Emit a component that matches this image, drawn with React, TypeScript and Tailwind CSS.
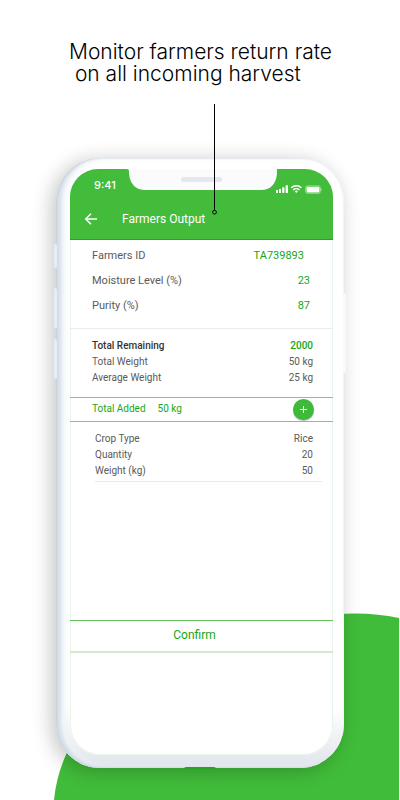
import type { ReactNode } from "react";

type RowProps = { label: string; value: string; bold?: boolean };

function SummaryRow({ label, value, bold }: RowProps) {
  return (
    <div className="flex h-4 items-center justify-between">
      <dt className={bold ? "font-medium text-[#333333]" : ""}>{label}</dt>
      <dd className={bold ? "font-medium text-[#16a616]" : ""}>{value}</dd>
    </div>
  );
}

function DetailRow({ label, children, inset }: { label: string; children: ReactNode; inset?: boolean }) {
  return (
    <div className={`flex h-[25px] items-center justify-between ${inset ? "pr-[29px]" : "pr-[23px]"}`}>
      <dt>{label}</dt>
      <dd className="text-[#16a616]">{children}</dd>
    </div>
  );
}

function StatusIcons() {
  return (
    <svg viewBox="0 0 46 10" className="h-[10px] w-[46px]" fill="white" aria-hidden="true">
      <rect x="0" y="6" width="2" height="3" rx="0.5" />
      <rect x="3" y="5" width="2" height="4" rx="0.5" />
      <rect x="6.2" y="3.3" width="2.2" height="5.7" rx="0.5" />
      <rect x="9.6" y="1.2" width="2.4" height="7.8" rx="0.5" />
      <g fill="none" stroke="white" strokeWidth="1.5">
        <path d="M15.2 3.8a7.3 7.3 0 0 1 10.2 0" />
        <path d="M17.2 5.9a4.5 4.5 0 0 1 6.2 0" />
      </g>
      <path d="M18.7 7.3a2.4 2.4 0 0 1 3.2 0l-1.6 1.8z" />
      <rect x="29.5" y="1.8" width="15" height="7.6" rx="2" fill="none" stroke="white" strokeOpacity="0.4" />
      <rect x="30.5" y="2.8" width="13" height="5.6" rx="1" />
      <path d="M45.2 4.4v2.4q.8-.4.8-1.2t-.8-1.2z" fillOpacity="0.6" />
    </svg>
  );
}

function PhoneScreen() {
  return (
    <div className="relative h-[586px] overflow-hidden rounded-t-[28px] rounded-b-[30px] bg-white font-[Roboto,'Liberation_Sans',sans-serif] shadow-[inset_0_0_0_1px_#e9f5ea]">
      <header className="border-b border-[#1fa81c] bg-[#43bc3b] text-white">
        <div className="flex h-[29px] items-start justify-between pt-2 pr-[11px] pl-6">
          <span className="font-[Inter,'Liberation_Sans',sans-serif] text-[11px] leading-4 font-medium">9:41</span>
          <span className="pt-[7px]">
            <StatusIcons />
          </span>
        </div>
        <div className="flex h-[41px] items-center gap-6 pl-[14px]">
          <button type="button" aria-label="Back" className="flex size-[14px] items-center justify-center">
            <svg viewBox="0 0 14 14" className="size-[14px]" fill="none" stroke="white" strokeWidth="1.5">
              <path d="M13 7H2M7 1.7 1.7 7 7 12.3" />
            </svg>
          </button>
          <h2 className="text-[12px] leading-4">Farmers Output</h2>
        </div>
      </header>

      <svg viewBox="0 0 150 22" className="absolute top-0 left-1/2 h-[22px] w-[150px] -translate-x-1/2" aria-hidden="true">
        <path d="M0 0h151q-1 0-1 2v3q-2 16-16 16H17Q4 20 2 5V2Q2 0 0 0z" fill="#fbfbfe" />
        <rect x="54" y="8" width="41" height="5" rx="2.5" fill="#e3e7ef" />
      </svg>

      <dl className="border-b border-[#e9ecea] pt-[3px] pb-[10px] pl-[22px] text-[11px] leading-4 text-[#5a5a5a]">
        <DetailRow label="Farmers ID" inset>TA739893</DetailRow>
        <DetailRow label="Moisture Level (%)">23</DetailRow>
        <DetailRow label="Purity (%)">87</DetailRow>
      </dl>

      <dl className="pt-[9px] pr-5 pb-[11px] pl-[22px] text-[10px] leading-4 text-[#5a5a5a]">
        <SummaryRow label="Total Remaining" value="2000" bold />
        <SummaryRow label="Total Weight" value="50 kg" />
        <SummaryRow label="Average Weight" value="25 kg" />
      </dl>

      <div className="flex h-[25px] items-center justify-between border-y border-[#7ccb79] pr-[19px] pl-[22px] text-[10px] leading-4 text-[#16a616]">
        <p className="flex gap-3 pb-0.5">
          <span>Total Added</span>
          <span>50 kg</span>
        </p>
        <button
          type="button"
          aria-label="Add crop"
          className="flex size-[21px] items-center justify-center rounded-full bg-[#3fb93a] shadow-[0_1px_1px_rgba(0,0,0,0.3)]"
        >
          <svg viewBox="0 0 7 7" className="size-[7px]" stroke="white" aria-hidden="true">
            <path d="M0 3.5h7M3.5 0v7" />
          </svg>
        </button>
      </div>

      <dl className="mr-[11px] ml-[25px] border-b border-[#e9e9e9] pt-[9px] pr-[9px] pb-0.5 text-[10px] leading-4 text-[#5a5a5a]">
        <SummaryRow label="Crop Type" value="Rice" />
        <SummaryRow label="Quantity" value="20" />
        <SummaryRow label="Weight (kg)" value="50" />
      </dl>

      <button
        type="button"
        className="mt-[138px] flex h-[33px] w-full justify-center border-t border-b-2 border-t-[#62c25e] border-b-[#d3e9d3] pt-[6px] pr-[14px] text-[12px] leading-4 text-[#16a616]"
      >
        Confirm
      </button>
    </div>
  );
}

export default function App() {
  return (
    <main className="relative min-h-[800px] w-full overflow-hidden bg-white font-[Inter,'Liberation_Sans',sans-serif]">
      <svg viewBox="0 0 345 187" preserveAspectRatio="none" className="absolute right-px bottom-0 h-[187px] w-[345px]" aria-hidden="true">
        <path d="M0 187C10 80 140 2 302 0.5Q324 0.5 345 5V187z" fill="#41bc3a" />
      </svg>

      <h1 className="mx-auto w-[262px] pt-[41px] text-[21px] leading-[22px] font-light whitespace-pre text-black">
        {"Monitor farmers return rate\n on all incoming harvest"}
      </h1>

      <div className="relative mx-auto mt-[73px] w-[288px]">
        <div className="relative rounded-[44px] bg-linear-to-b from-white from-90% to-[#dfe5eb] pt-[11px] pr-[11px] pb-[13px] pl-[14px] shadow-[inset_1px_0_2px_#c3cedb,inset_5px_-1px_3px_#d8e0e9,inset_9px_0_6px_#eff3f7,inset_-1px_0_1px_#f4f5f7,-4px_3px_20px_rgba(0,0,0,0.24)]">
          <PhoneScreen />
          <div className="absolute -bottom-px left-32 h-0.5 w-8 rounded-t bg-[#27a323]" />
        </div>
        <div className="absolute top-[86px] -left-0.5 h-6 w-[3px] rounded bg-[#e6edf4]" />
        <div className="absolute top-[130px] -left-0.5 h-10 w-[3px] rounded bg-[#e6edf4]" />
        <div className="absolute top-[181px] -left-0.5 h-10 w-[3px] rounded bg-[#e6edf4]" />
        <div className="absolute top-[135px] -right-0.5 h-20 w-[3px] rounded bg-[#f8fafc]" />
        <svg viewBox="0 0 5 111" className="absolute -top-[54px] left-[156px] h-[111px] w-[5px]" fill="none" stroke="black" aria-hidden="true">
          <path d="M2.5 0v106" />
          <circle cx="2.5" cy="108.2" r="1.9" />
        </svg>
      </div>
    </main>
  );
}
